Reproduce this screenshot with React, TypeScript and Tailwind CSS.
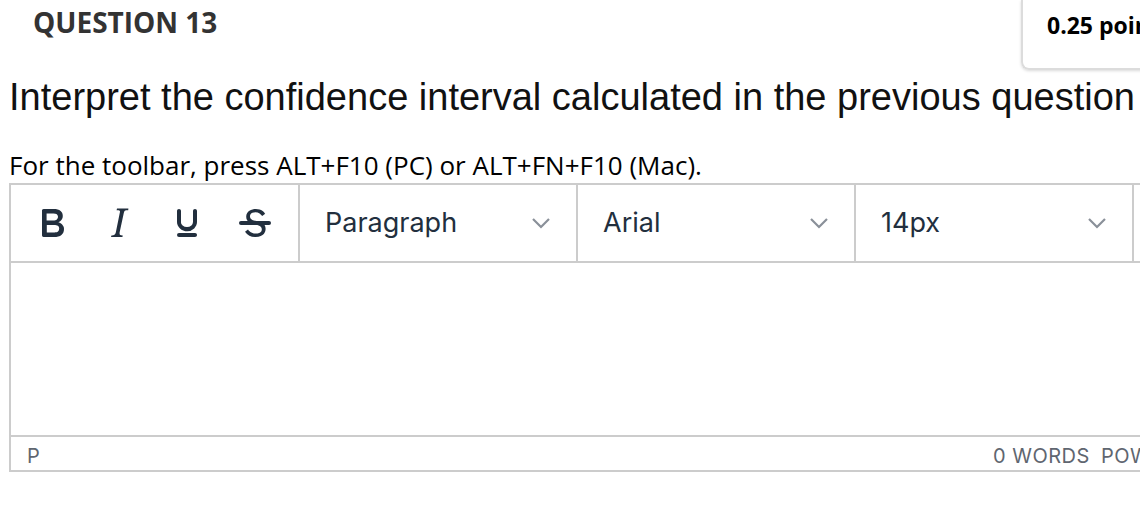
import React from 'react';

const ink = '#222f3e';

function BoldIcon() {
  return (
    <svg width="48" height="48" viewBox="0 0 24 24" fill={ink}>
      <path d="M7.8 19c-.3 0-.5 0-.6-.2l-.2-.5V5.7c0-.2 0-.4.2-.5l.6-.2h5c1.5 0 2.7.3 3.5 1 .7.6 1.1 1.4 1.1 2.5a3 3 0 0 1-.6 1.9c-.4.6-1 1-1.6 1.2.4.1.9.3 1.300.6s.8.7 1 1.2c.4.4.5 1 .5 1.6 0 1.3-.4 2.3-1.3 3-.8.7-2.1 1-3.8 1H7.8zm5-8.3c.6 0 1.2-.1 1.6-.5.4-.3.6-.7.6-1.3 0-1.1-.8-1.7-2.3-1.7H9.3v3.5h3.4zm.5 6c.7 0 1.3-.1 1.7-.4.4-.4.6-.9.6-1.5s-.2-1-.7-1.4c-.4-.3-1-.4-2-.4H9.4v3.8h4z" />
    </svg>
  );
}

function ItalicIcon() {
  return (
    <svg width="48" height="48" viewBox="0 0 24 24" fill={ink}>
      <path d="M16.7 4.7l-.1.9h-.3c-.6 0-1 0-1.4.3-.3.3-.4.6-.5 1.1l-2.1 9.8v.6c0 .5.4.8 1.4.8h.2l-.2.8H8l.2-.8h.2c1.1 0 1.8-.5 2-1.5l2-9.8.1-.5c0-.6-.4-.8-1.4-.8h-.3l.2-.9h5.8z" />
    </svg>
  );
}

function UnderlineIcon() {
  return (
    <svg width="48" height="48" viewBox="0 0 24 24" fill={ink}>
      <path d="M16 5c.6 0 1 .4 1 1v5.5a4 4 0 0 1-.4 1.8l-1 1.4a5.3 5.3 0 0 1-5.5 1 5 5 0 0 1-1.6-1c-.5-.4-.8-.9-1.1-1.4a4 4 0 0 1-.4-1.8V6c0-.6.4-1 1-1s1 .4 1 1v5.5c0 .3 0 .6.2 1l.6.7a3.3 3.3 0 0 0 2.2.8 3.4 3.4 0 0 0 2.2-.8c.3-.2.4-.5.6-.8l.2-.9V6c0-.6.4-1 1-1zM8 17h8c.6 0 1 .4 1 1s-.4 1-1 1H8a1 1 0 0 1 0-2z" />
    </svg>
  );
}

function StrikeIcon() {
  return (
    <svg width="48" height="48" viewBox="0 0 24 24" fill={ink}>
      <path d="M15.6 8.5c-.5-.7-1-1.1-1.3-1.3-.6-.4-1.3-.6-2-.6-2.7 0-2.8 1.7-2.8 2.1 0 1.6 1.8 2 3.2 2.3 4.4.9 4.6 2.8 4.6 3.9 0 1.4-.7 4.1-5 4.1A6.2 6.2 0 0 1 7 16.4l1.5-1.1c.4.6 1.6 2 3.7 2 1.6 0 2.5-.4 3-1.2.4-.8.3-2-.8-2.6-.7-.4-1.6-.7-2.9-1-1-.2-3.9-.8-3.9-3.6C7.6 6 10.3 5 12.4 5c2.9 0 4.2 1.6 4.7 2.4l-1.5 1.1z" />
      <path d="M5 11h14a1 1 0 0 1 0 2H5a1 1 0 0 1 0-2z" />
    </svg>
  );
}

function Chevron() {
  return (
    <svg width="20" height="12" viewBox="0 0 20 12" fill="none" stroke="#8a9099" strokeWidth="2.2">
      <polyline points="2,2 10,10 18,2" />
    </svg>
  );
}

function Select({ label }: { label: string }) {
  return (
    <div className="flex w-[278px] shrink-0 items-center justify-between border-l-2 border-[#cccccc] pl-[25px] pr-[25px]">
      <span className="text-[27px]">{label}</span>
      <Chevron />
    </div>
  );
}

export default function App() {
  return (
    <div className="relative h-[532px] w-[1140px] overflow-hidden bg-white">
      <div className="flex h-[70px] items-start justify-between">
        <h2
          className="pl-[33px] pt-[1px] text-[28px] font-bold text-[#333333]"
          style={{ fontFamily: '"Open Sans", sans-serif' }}
        >
          QUESTION 13
        </h2>
        <div
          className="mr-[-100px] h-[70px] w-[219px] shrink-0 whitespace-nowrap rounded-bl-[8px] border-b-2 border-l-2 border-[#dcdcdc] pl-[24px] pt-[8px] text-[23px] font-bold text-black shadow-[0_1px_3px_rgba(0,0,0,0.15)]"
          style={{ fontFamily: '"Open Sans", sans-serif' }}
        >
          0.25 points
        </div>
      </div>

      <h3
        className="whitespace-nowrap pl-[9px] pt-[6px] text-[38px] leading-[42px] text-[#111111]"
        style={{ fontFamily: '"Liberation Sans", Arial, sans-serif' }}
      >
        Interpret the confidence interval calculated in the previous question
      </h3>

      <p
        className="whitespace-nowrap pl-[9px] pt-[29px] text-[26px] leading-[36px] text-black"
        style={{ fontFamily: '"Open Sans", sans-serif' }}
      >
        For the toolbar, press ALT+F10 (PC) or ALT+FN+F10 (Mac).
      </p>

      <div
        className="ml-[9px] w-[1200px] border-2 border-[#cccccc] text-[#222f3e]"
        style={{ fontFamily: 'Inter, Roboto, sans-serif' }}
      >
        <div className="flex h-[78px] border-b-2 border-[#cccccc]">
          <div className="flex w-[287px] shrink-0 items-center pl-[8px]">
            <div className="flex w-[66px] justify-center"><BoldIcon /></div>
            <div className="flex w-[68px] justify-center"><ItalicIcon /></div>
            <div className="flex w-[68px] justify-center"><UnderlineIcon /></div>
            <div className="flex w-[68px] justify-center"><StrikeIcon /></div>
          </div>
          <Select label="Paragraph" />
          <Select label="Arial" />
          <Select label="14px" />
          <div className="flex-1 border-l-2 border-[#cccccc]" />
        </div>
        <div className="h-[172px]" />
        <div className="flex h-[35px] items-center overflow-hidden whitespace-nowrap border-t-2 border-[#cccccc] pt-[4px] text-[20px] tracking-[0.5px] text-[#5f6670]">
          <span className="w-[982px] shrink-0 pl-[16px]">P</span>
          <span className="shrink-0">0 WORDS</span>
          <span className="ml-[11px] shrink-0">POWERED BY TINY</span>
        </div>
      </div>
    </div>
  );
}
